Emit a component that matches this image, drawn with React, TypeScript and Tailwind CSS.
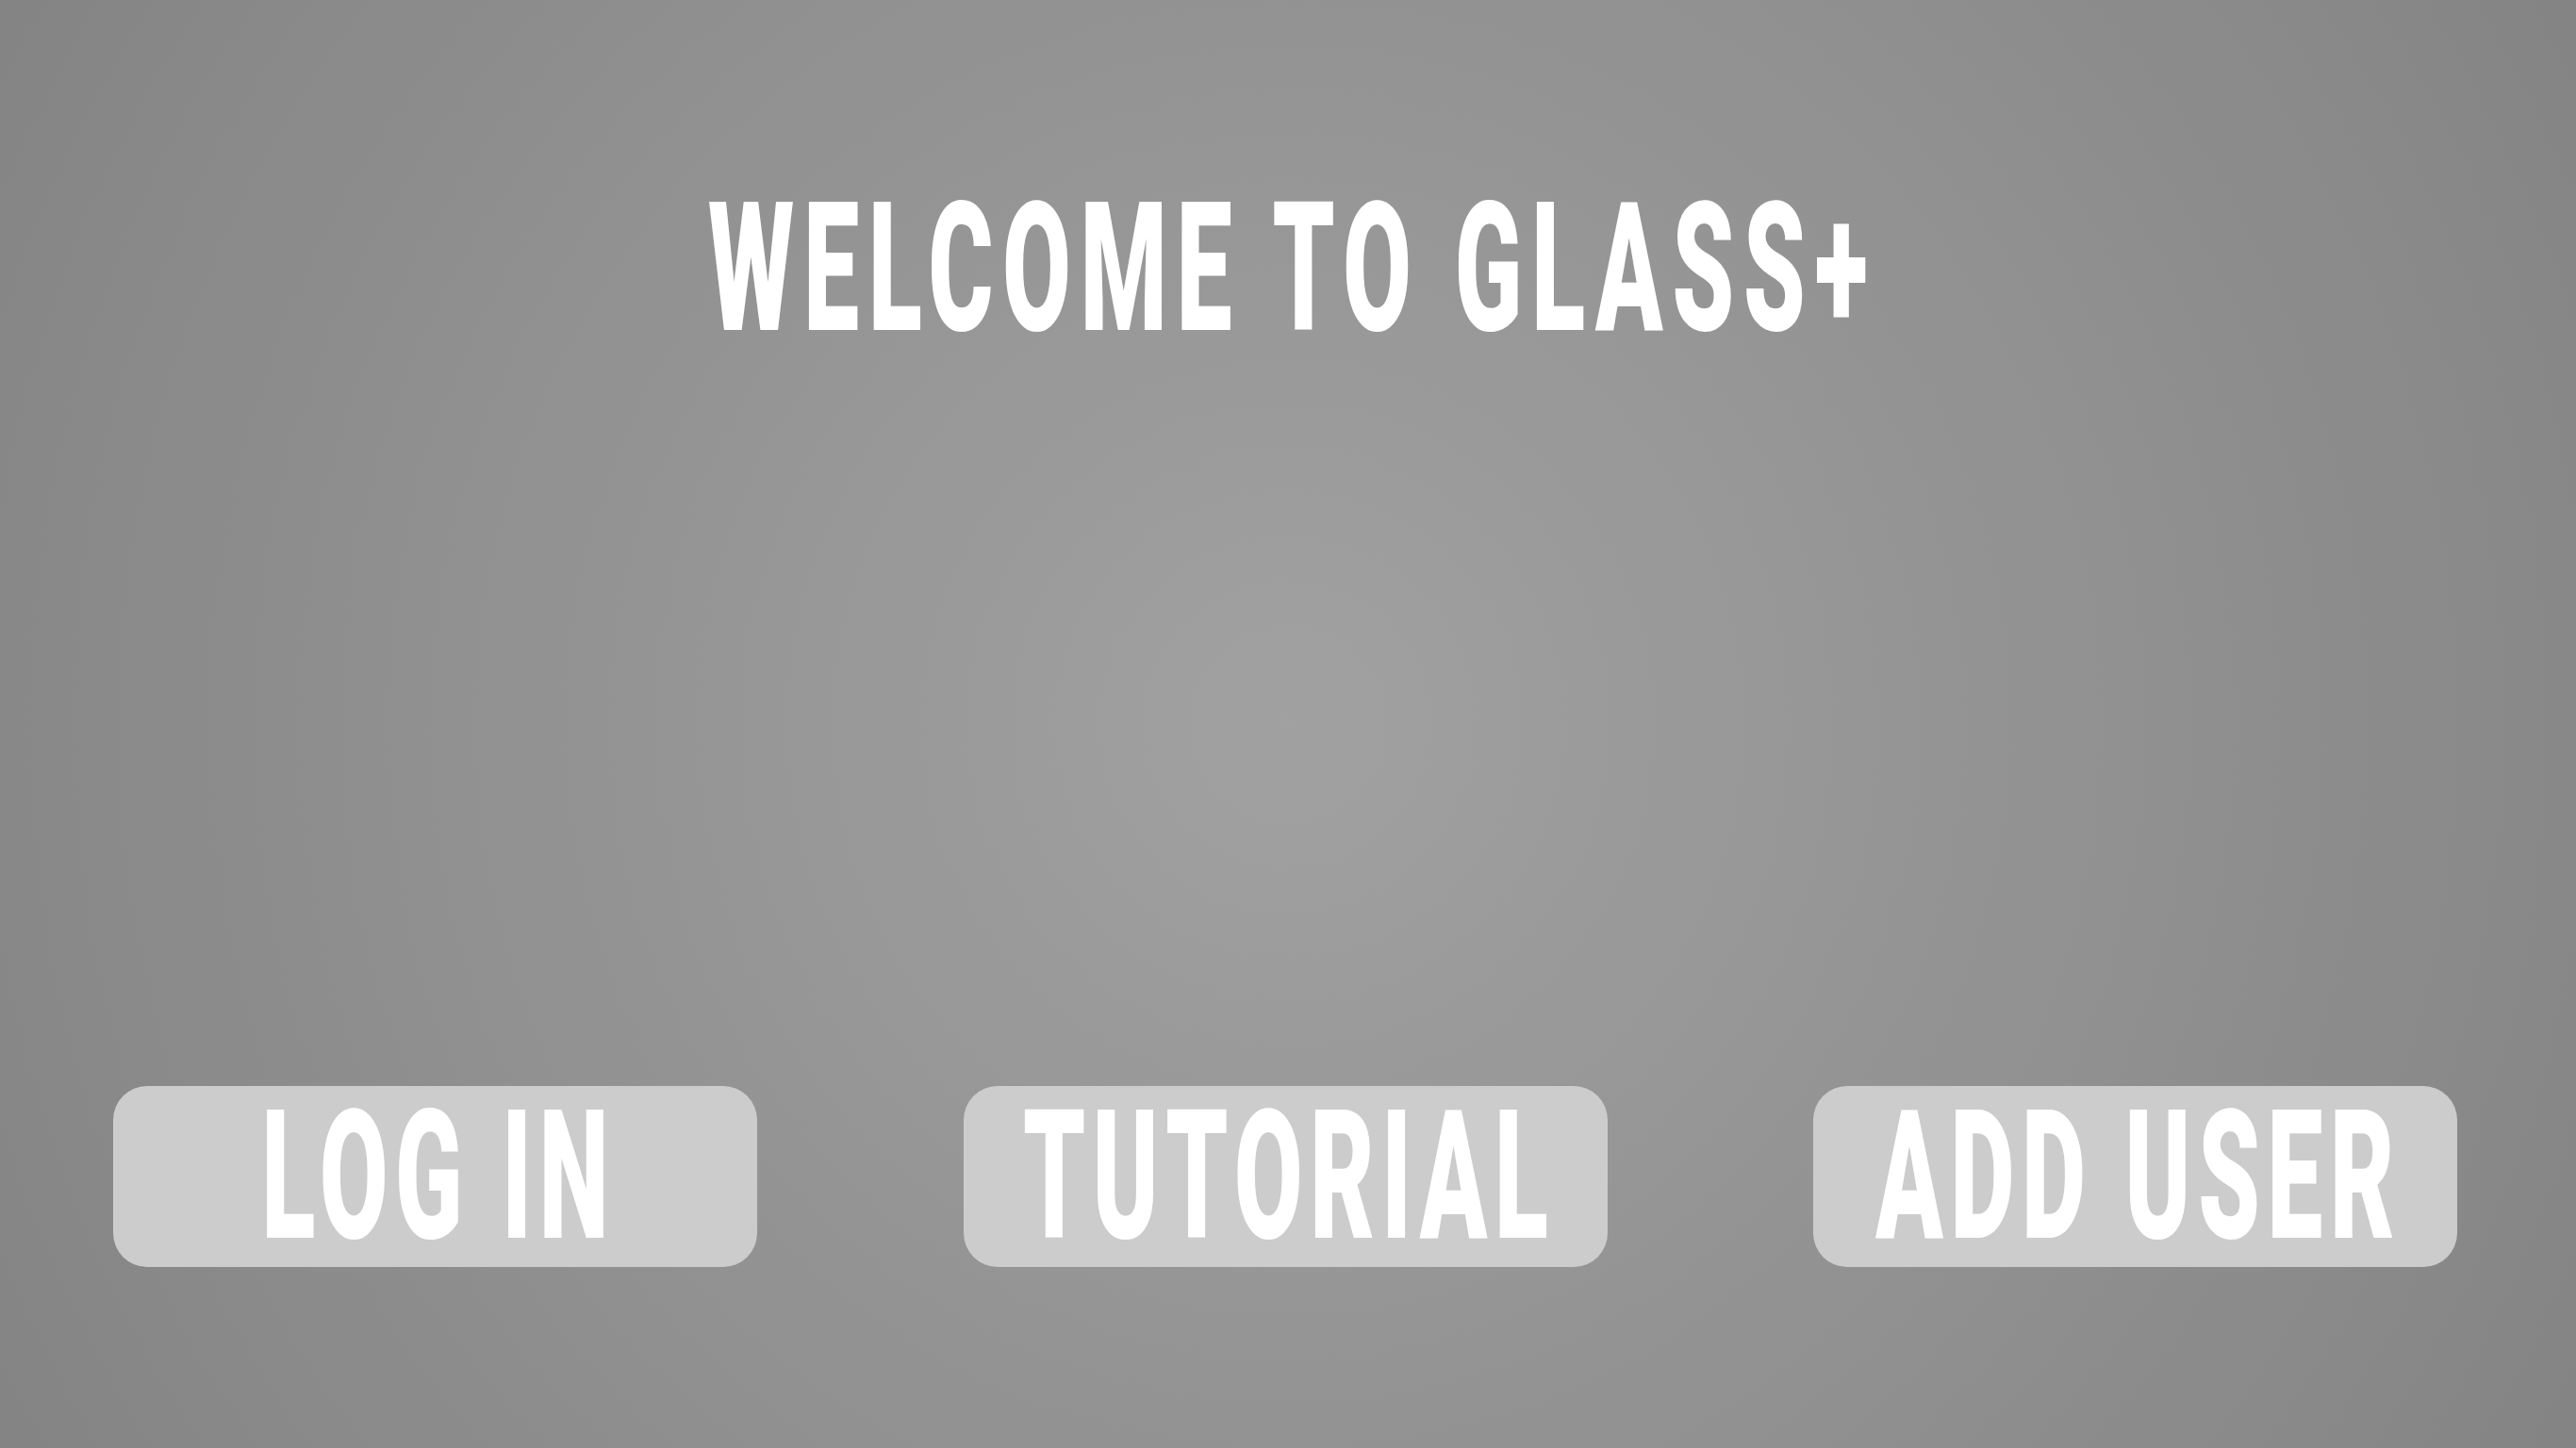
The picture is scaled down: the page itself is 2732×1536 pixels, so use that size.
import React from "react";

const buttons = ["LOG IN", "TUTORIAL", "ADD USER"];

const App = () => {
  return (
    <div
      className="flex h-[1536px] w-full flex-col overflow-hidden bg-radial-[circle_at_50%_50%] from-[#a1a1a1] to-[#848484] text-white"
      style={{ fontFamily: "Roboto, 'Liberation Sans', sans-serif" }}
    >
      {/* Title */}
      <div className="flex justify-center pt-[190px]">
        <h1 className="scale-x-[0.55] whitespace-nowrap pl-[18px] text-[191px] leading-none font-black tracking-[18px]">
          WELCOME TO GLASS+
        </h1>
      </div>

      <div className="flex-1" />

      {/* Menu buttons */}
      <div className="flex items-center justify-between pb-[192px] pl-[120px] pr-[126px]">
        {buttons.map((label) => (
          <button
            key={label}
            className="flex h-[192px] w-[683px] items-center justify-center rounded-[36px] bg-[#cccccc]"
          >
            <span className="scale-x-[0.55] whitespace-nowrap pl-[14px] text-[191px] leading-none font-black tracking-[14px] text-white">
              {label}
            </span>
          </button>
        ))}
      </div>
    </div>
  );
};

export default App;
